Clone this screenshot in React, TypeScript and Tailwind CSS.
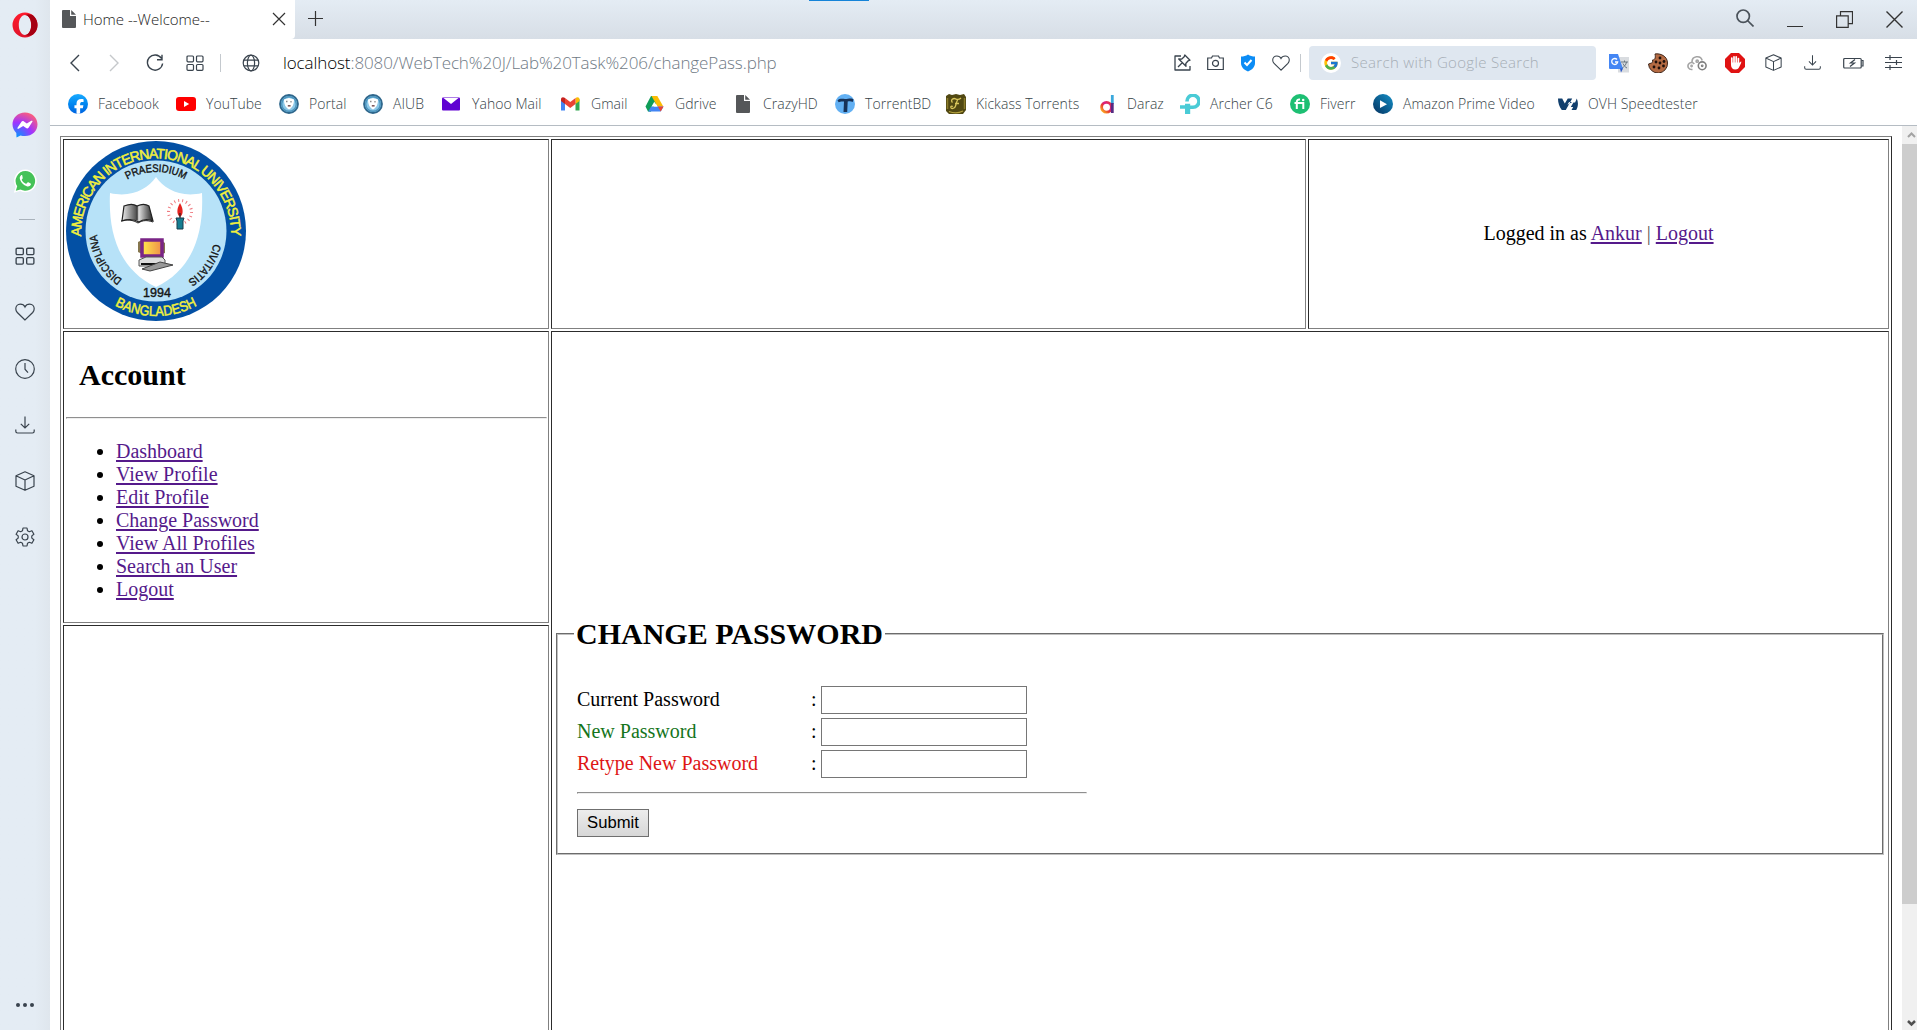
import React from "react";
import { FcGoogle } from "react-icons/fc";
import { FaFacebookF } from "react-icons/fa6";

type LineProps = { s?: number; w?: number; vb?: number; className?: string; children: React.ReactNode };

const Line = ({ s = 20, w = 1.2, vb = 20, className = "", children }: LineProps) => (
  <svg width={s} height={s} viewBox={`0 0 ${vb} ${vb}`} fill="none" stroke="currentColor" strokeWidth={w} className={`block shrink-0 ${className}`}>
    {children}
  </svg>
);

const Opera = () => (
  <svg width="26" height="26" viewBox="0 0 26 26" className="block">
    <defs>
      <linearGradient id="opA" x1="0" y1="0" x2="0" y2="1"><stop offset="0" stopColor="#ff1b2d" /><stop offset="1" stopColor="#e0132a" /></linearGradient>
    </defs>
    <path fillRule="evenodd" fill="url(#opA)" d="M13 .5a12.5 12.5 0 1 0 0 25 12.500 12.500 0 0 0 0-25zM13 3c3.600 0 6.200 4.400 6.200 10S16.600 23 13 23 6.800 18.600 6.800 13 9.400 3 13 3z" />
    <path fill="#a50012" d="M13 3c4-1.500 7.500-.5 8.700 1a12.500 12.500 0 0 1 0 18c-1.700 1.600-5 2.300-8.700 1 3.600 0 6.200-4.400 6.200-10S16.600 3 13 3z" />
  </svg>
);

const Messenger = () => (
  <svg width="26" height="26" viewBox="0 0 26 26" className="block">
    <defs>
      <radialGradient id="msg" cx=".2" cy="1" r="1.100"><stop offset="0" stopColor="#0099ff" /><stop offset=".55" stopColor="#a033ff" /><stop offset="1" stopColor="#ff6077" /></radialGradient>
    </defs>
    <path fill="url(#msg)" d="M13 .5C5.800.500.500 5.700.500 12.300c0 3.500 1.400 6.500 3.800 8.600L4.500 25.500l4-2c1.400.400 2.900.600 4.500.600 7.200 0 12.500-5.200 12.500-11.800S20.200.500 13 .500z" />
    <path fill="#fff" d="M5.500 15.700l3.800-5.800c.6-.9 1.800-1.100 2.600-.500l2.900 2.200 4.500-2.800c.7-.5 1.600.3 1.100 1l-3.700 5.800c-.6.900-1.800 1.100-2.600.500l-2.900-2.200-4.600 2.800c-.7.500-1.600-.3-1.100-1z" />
  </svg>
);

const WhatsApp = () => (
  <svg width="24" height="24" viewBox="0 0 24 24" className="block">
    <path fill="#fff" d="M12.500.500a11.300 11.300 0 0 0-9.800 17L.8 23.800l6.400-1.700A11.400 11.400 0 1 0 12.500.500z" />
    <path fill="#45c258" d="M12.500 2a9.900 9.900 0 0 0-8.300 15.200l-1.400 4.600 4.700-1.200A9.900 9.900 0 1 0 12.500 2z" />
    <path fill="#fff" d="M9.300 6.600c-.3-.6-.9-.6-1.200-.300-1.300 1.100-1.700 2.600-1 4.400 1.200 3 3.500 5.400 6.700 6.600 1.600.5 3.200.1 4-1.500.3-.7.2-1.200-.2-1.400l-2.200-1.100c-.4-.2-.6-.1-.9.200l-.9 1.100c-.2.300-.5.300-.8.200-1.800-.8-3.100-2-4-3.700-.2-.3-.1-.5.100-.7l.7-.9c.2-.3.2-.5.100-.8z" />
  </svg>
);

const Grid = ({ s = 18 }) => (
  <Line s={s} vb={18}>
    <rect x="1" y="2" width="6.500" height="5.800" rx="1" /><rect x="10.500" y="2" width="6.500" height="5.800" rx="1" />
    <rect x="1" y="10.500" width="6.500" height="5.800" rx="1" /><rect x="10.500" y="10.500" width="6.500" height="5.800" rx="1" />
  </Line>
);
const Heart = ({ s = 20 }) => (
  <Line s={s}><path d="M10 18 2.300 10.500A5 5 0 0 1 .8 6.800C.8 4.200 2.800 2.200 5.300 2.200 7.400 2.200 9.200 3.300 10 5c.8-1.700 2.600-2.800 4.700-2.800 2.500 0 4.500 2 4.500 4.600 0 1.500-.6 2.700-1.500 3.700z" /></Line>
);
const Clock = () => (
  <Line><circle cx="10" cy="10" r="9.300" /><path d="M10 4v6.200l3 3.500" /></Line>
);
const Download = ({ s = 20 }) => (
  <Line s={s}><path d="M10 1.500v11.500M5.800 8.800 10 13l4.200-4.200M.8 14.500v1.800c0 1.200.8 1.700 1.700 1.700h15c1 0 1.700-.5 1.700-1.700v-1.800" /></Line>
);
const Cube = ({ s = 20 }) => (
  <Line s={s}><path d="M10 .8 19 4.800v10.400L10 19.300 1 15.200V4.800zM1 4.800l9 4.200 9-4.200M10 9v10.300" strokeLinejoin="round" /></Line>
);
const Gear = () => (
  <Line><path strokeLinejoin="round" d="M8 1h4l.5 2.700 1.800 1 2.600-1 2 3.500-2.100 1.700v2.200l2.100 1.700-2 3.500-2.600-1-1.800 1L12 19H8l-.5-2.700-1.800-1-2.600 1-2-3.500 2.100-1.700V8.900L1.100 7.200l2-3.500 2.600 1 1.800-1z" /><circle cx="10" cy="10" r="3" /></Line>
);

const PageFile = () => (
  <svg width="14" height="18" viewBox="0 0 14 18" className="block"><path fill="#555759" d="M1 0h7v6h6v11a1 1 0 0 1-1 1H1a1 1 0 0 1-1-1V1a1 1 0 0 1 1-1zM9.200 0 14 4.800H9.200z" /></svg>
);

const Facebook = () => (
  <span className="flex size-5 items-end justify-center overflow-hidden rounded-full bg-gradient-to-b from-[#19aaff] to-[#0062e0]">
    <FaFacebookF className="size-[16px] translate-x-[1px] translate-y-[1px] text-white" />
  </span>
);
const YouTube = () => (
  <svg width="20" height="20" viewBox="0 0 20 20" className="block"><rect y="3" width="20" height="14" rx="3" fill="#f00" /><path d="M8 7l5.200 3L8 13z" fill="#fff" /></svg>
);
const Crest = () => (
  <svg width="20" height="20" viewBox="0 0 20 20" className="block">
    <circle cx="10" cy="10" r="9" fill="#8cc8e8" stroke="#2f678c" strokeWidth="1.800" />
    <circle cx="10" cy="10" r="7.300" fill="none" stroke="#4c94bd" strokeWidth="1.400" />
    <path d="M5 5.500l5-1.500 5 1.500c0 5-1.500 8-5 10-3.500-2-5-5-5-10z" fill="#fff" />
    <path d="M7 7.500h1.500M12 7v1.500" stroke="#8a8a8a" strokeWidth="1.300" /><path d="M8.800 11h2.800v1.600H8.800z" fill="#7d5a5c" />
  </svg>
);
const Yahoo = () => (
  <svg width="20" height="20" viewBox="0 0 20 20" className="block"><rect y="3.500" width="18" height="13" rx="1" fill="#6001d2" /><path d="M1.500 4h15L9 10z" fill="#fff" /></svg>
);
const Gmail = () => (
  <svg width="20" height="20" viewBox="0 0 20 20" className="block">
    <path fill="#4285f4" d="M0 5v11.500h4V9z" /><path fill="#34a853" d="M18.500 5v11.500h-4V9z" />
    <path fill="#c5221f" d="M0 5.500C0 3 2.200 2.500 4 4v6L0 7z" /><path fill="#fbbc04" d="M18.500 5.500c0-2.500-2.200-3-4-1.500v6l4-3z" />
    <path fill="#ea4335" d="M4 4l5.250 4L14.500 4v6l-5.250 4L4 10z" />
  </svg>
);
const Drive = () => (
  <svg width="20" height="20" viewBox="0 0 20 20" className="block">
    <path fill="#0f9d58" d="M6 2h3.800l2.800 4.800-6.800 11L3 17.500.5 12.500z" /><path fill="#fbbc04" d="M6.500 2h5.800l6 10.500h-5.800z" />
    <path fill="#4285f4" d="M6.200 12.500h12.300l-2.800 5H3.200z" /><path fill="#ea4335" d="M12.800 12.500h5.700l-2.800 5z" />
    <path fill="#fff" d="M9.300 7.700l2.900 4.800H6.500z" />
  </svg>
);
const TorrentBD = () => (
  <svg width="20" height="20" viewBox="0 0 20 20" className="block"><circle cx="10" cy="10" r="10" fill="#62b0f3" /><path fill="#173258" d="M2.500 6.500c2-2 4-1.800 7.500-1.500 3.500 0 6.500-1.500 8.500.5l-.8 2.500c-1.500-.8-3-.7-5-.5l-.5 10.500H8.500L9 7.500c-2-.1-4-.2-5.300.8z" /></svg>
);
const Kickass = () => (
  <svg width="20" height="20" viewBox="0 0 20 20" className="block">
    <path fill="#514812" d="M0 2l3-2 3 1 4-1 4 1 4-1 2 3v13l-3 4H3l-3-3z" />
    <path d="M6.500 8.500C4 6 7.500 3.800 9.500 4.800s3.500 1 5.500-.8M12 5c-1.500 2.500-1.800 5-2.500 7-.7 2.200-3.300 3.200-4.500 1.800-.8-1.200.8-2.300 1.800-1.200M9 9.500h4" stroke="#d9c65c" strokeWidth="1.300" fill="none" />
    <path d="M3 17.500c4 1.500 10 1.500 14-.5" stroke="#b5a23e" strokeWidth="1.300" fill="none" />
    <path d="M1.500 4v11M18.500 4v11" stroke="#8b7b2b" strokeWidth="1.500" />
  </svg>
);
const Daraz = () => (
  <svg width="20" height="20" viewBox="0 0 20 20" className="ml-[3px] block">
    <defs><linearGradient id="dz" x1="0" y1="1" x2="1" y2="0"><stop offset="0" stopColor="#ffbc20" /><stop offset=".4" stopColor="#e73b32" /><stop offset=".6" stopColor="#d91c88" /><stop offset="1" stopColor="#e73b32" /></linearGradient></defs>
    <circle cx="6.500" cy="13.200" r="4.900" stroke="url(#dz)" strokeWidth="2.800" fill="none" />
    <path d="M12.300 1v9" stroke="#3aa8dc" strokeWidth="2.800" fill="none" />
    <path d="M12.300 9v10" stroke="#562b83" strokeWidth="2.800" fill="none" />
  </svg>
);
const Archer = () => (
  <svg width="20" height="20" viewBox="0 0 20 20" className="block">
    <path d="M7 7.500A6 6 0 1 1 13 13.200H9.500" fill="none" stroke="#4acbd6" strokeWidth="3.600" /><path fill="#4acbd6" d="M0 11.300h6v3.500H0zM5 9.800h5.200V20H5z" />
  </svg>
);
const Fiverr = () => (
  <svg width="20" height="20" viewBox="0 0 20 20" className="block"><circle cx="10" cy="10" r="10" fill="#1dbf73" /><path d="M6.800 15V8.200c0-2 1-2.800 3.200-2.600M4.500 9h8.800v6" stroke="#fff" strokeWidth="2" fill="none" /><circle cx="13.200" cy="5.900" r="1.250" fill="#fff" /></svg>
);
const Prime = () => (
  <svg width="20" height="20" viewBox="0 0 20 20" className="block"><defs><linearGradient id="pv" x1="1" y1="0" x2="0" y2="1"><stop offset="0" stopColor="#1591c8" /><stop offset="1" stopColor="#04315f" /></linearGradient></defs><circle cx="10" cy="10" r="10" fill="url(#pv)" /><path d="M7 6.200l7 4-7 3.800z" fill="#fff" /></svg>
);
const Ovh = () => (
  <svg width="20" height="20" viewBox="0 0 20 20" className="block"><path fill="#123f6d" d="M0 4.500h4.200l2.600 5 3-5h4.400L7.800 16h-4C1.300 13 0 9 0 4.500zM14.300 8h-3.200l-1.600 2.800M18.800 4.500c1.700 4 1.500 8-.6 11.500h-4.700l1.700-3h-2.400l2.600-4.500h1.700z" /></svg>
);

const bookmarks = [
  { label: "Facebook", icon: <Facebook />, w: "w-[108px]" },
  { label: "YouTube", icon: <YouTube />, w: "w-[103px]" },
  { label: "Portal", icon: <Crest />, w: "w-[84px]" },
  { label: "AIUB", icon: <Crest />, w: "w-[79px]" },
  { label: "Yahoo Mail", icon: <Yahoo />, w: "w-[119px]" },
  { label: "Gmail", icon: <Gmail />, w: "w-[84px]" },
  { label: "Gdrive", icon: <Drive />, w: "w-[88px]" },
  { label: "CrazyHD", icon: <span className="flex pl-[3px]"><PageFile /></span>, w: "w-[102px]" },
  { label: "TorrentBD", icon: <TorrentBD />, w: "w-[111px]" },
  { label: "Kickass Torrents", icon: <Kickass />, w: "w-[151px]" },
  { label: "Daraz", icon: <Daraz />, w: "w-[83px]" },
  { label: "Archer C6", icon: <Archer />, w: "w-[110px]" },
  { label: "Fiverr", icon: <Fiverr />, w: "w-[83px]" },
  { label: "Amazon Prime Video", icon: <Prime />, w: "w-[185px]" },
  { label: "OVH Speedtester", icon: <Ovh />, w: "w-[160px]" },
];

const Sidebar = () => (
  <aside className="flex h-[1030px] w-[50px] shrink-0 flex-col items-center bg-[#e4ecf4] bg-gradient-to-r from-[#e4ecf4] from-70% to-[#dfe6ed] text-[#39434d]">
    <div className="mt-3 h-[100px]"><Opera /></div>
    <div className="h-[57px]"><Messenger /></div>
    <div className="h-12"><WhatsApp /></div>
    <div className="ml-1 mt-[2px] h-[27px] w-4 border-t border-[#a9b2bb]" />
    <div className="flex flex-col items-center gap-[36.300px]">
      <Grid s={20} /><Heart /><Clock /><Download /><Cube /><Gear />
    </div>
    <div className="mb-[23px] mt-auto flex gap-[3px]">
      <i className="size-[4px] rounded-full bg-[#39434d]" /><i className="size-[4px] rounded-full bg-[#39434d]" /><i className="size-[4px] rounded-full bg-[#39434d]" />
    </div>
  </aside>
);

const TabStrip = () => (
  <div className="flex h-[39px] bg-gradient-to-b from-[#e4ecf4] to-[#d7dee6]">
    <div className="flex w-[245px] items-start rounded-br bg-white pl-3 pt-[10px]">
      <PageFile />
      <span className="ml-[7px] w-[189px] whitespace-nowrap text-[15px] leading-[19px] text-[#222]">Home --Welcome--</span>
      <Line s={14} vb={14} className="mt-[2px] text-[#333]"><path d="M1 1l12 12M13 1 1 13" /></Line>
      <span className="w-[9px]" />
    </div>
    <Line s={15} vb={15} className="ml-[13px] mt-[11px] text-[#333]"><path d="M7.500 0v15M0 7.500h15" /></Line>
    <div className="relative h-full grow">
      <span className="absolute left-[486px] top-0 h-px w-[60px] bg-[#1583d8]" />
    </div>
    <div className="flex w-[181px] text-[#333]">
      <Line s={18} vb={18} w={1.700} className="mt-[9px] text-[#4a525a]"><circle cx="7.200" cy="7.200" r="6.200" /><path d="M11.500 11.500 17.500 17.500" /></Line>
      <span className="ml-[33px] mt-[26px] h-px w-4 bg-[#333]" />
      <Line s={17} vb={17} className="ml-[33px] mt-[11px]"><path d="M.6 4.800h11.600v11.600H.6zM4.500 4.800V.600h12v12h-4.300" /></Line>
      <Line s={17} vb={17} w={1.400} className="ml-[33px] mt-[11px]"><path d="M.5.500l16 16M16.500.500l-16 16" /></Line>
    </div>
  </div>
);

const Toolbar = () => (
  <div className="flex h-[49px] items-center pb-[2px] pl-5 text-[#39434d]">
    <Line s={18} vb={18} w={1.400}><path d="M9 1 1 9l8 8" /></Line>
    <Line s={18} vb={18} w={1.400} className="ml-[21px] text-[#c5c8cb]"><path d="M1 1l8 8-8 8" /></Line>
    <Line s={18} vb={18} w={1.400} className="ml-[19px]"><path d="M15.500 4.500A7.600 7.600 0 1 0 16.600 9.500M16 .8v5h-5" /></Line>
    <span className="ml-[22px]"><Grid /></span>
    <span className="ml-[16px] h-[18px] w-px bg-[#c4c9ce]" />
    <Line s={18} vb={18} className="ml-[21px]"><circle cx="9" cy="9" r="7.800" /><ellipse cx="9" cy="9" rx="3.600" ry="7.800" /><path d="M2 6.200h14M2 11.800h14" /></Line>
    <span className="ml-[23px] w-[891px] whitespace-nowrap text-[17px] tracking-[-0.1px] text-[#6f7a85]"><span className="text-black">localhost</span>:8080/WebTech%20J/Lab%20Task%206/changePass.php</span>
    <Line s={17} vb={17} w={1.300}><path d="M7 2H1v14h15v-4M4 13l4.500-4.500M10.800 1l5.200 5.200-1.800.6-2.400 2.700.2 2.800-7.300-7.300 2.800.2 2.700-2.400z" strokeLinejoin="round" /></Line>
    <Line s={17} vb={17} className="ml-[16px]"><path d="M.7 4h3.800l1-2h6l1 2h3.800v11.500H.700z" /><circle cx="8.500" cy="9.300" r="3" /></Line>
    <svg width="16" height="18" viewBox="0 0 16 18" className="ml-4 shrink-0"><path d="M8 .5c2 1.500 4.500 2 7 2v6.500c0 4-3 7-7 8.500-4-1.500-7-4.500-7-8.500V2.500c2.500 0 5-.5 7-2z" fill="#0c8cf5" /><path d="M4.500 8.500l2.500 2.500 4.500-5" stroke="#fff" strokeWidth="2" fill="none" /></svg>
    <span className="ml-[16px]"><Heart s={18} /></span>
    <span className="ml-[10px] h-[18px] w-px bg-[#c4c9ce]" />
    <div className="ml-2 flex h-[34px] w-[287px] shrink-0 items-center rounded-sm bg-[#dfe7f0] pl-[12px]">
      <span className="flex size-5 items-center justify-center rounded-full bg-white"><FcGoogle className="size-4" /></span>
      <span className="ml-[10px] whitespace-nowrap text-[15px] tracking-[0.320px] text-[#a6aeb6]">Search with Google Search</span>
    </div>
    <svg width="20" height="20" viewBox="0 0 20 20" className="ml-[13px] shrink-0"><rect x="9" y="4" width="11" height="15.500" fill="#d9dce0" /><path d="M12 9h7M15.500 7.500V9M17.500 9c-.5 3-2.500 5-4.500 6M14 10.500c1 2 2 3.500 4 4.500" stroke="#697681" fill="none" /><path d="M0 1h9l5 15H1a1 1 0 0 1-1-1z" fill="#4486f4" /><path d="M11 15.500h3l-2 4z" fill="#2a56c6" /><path d="M8 6.500A3 3 0 1 0 8.700 9H6" stroke="#fff" strokeWidth="1.300" fill="none" /></svg>
    <svg width="20" height="20" viewBox="0 0 20 20" className="ml-[19px] shrink-0"><path d="M7 1C12 0 19.500 3 19.500 10a9.500 9.500 0 0 1-19 1l3-1c1 0 1.500-1.500 1-3 2 0 3.500-1.500 2.500-6z" fill="#b56b43" stroke="#41281d" /><g fill="#1f100b"><circle cx="8" cy="9" r="1.400" /><circle cx="12" cy="5" r="1.400" /><circle cx="12" cy="10" r="1.400" /><circle cx="16" cy="8.500" r="1.400" /><circle cx="6" cy="14" r="1.400" /><circle cx="11" cy="15" r="1.400" /><circle cx="15.500" cy="13" r="1.400" /></g></svg>
    <Line className="ml-[19px] text-[#a4a4a4]" w={1.600}><path d="M5.500 16.500H4.500a3.500 3.500 0 1 1 2.800-5.600M5 9a5.200 5.200 0 0 1 10.200-1.500" /><circle cx="10.200" cy="8.200" r="1.100" /><circle cx="4.600" cy="13" r=".6" /><circle cx="15.200" cy="12.800" r="3.900" stroke="#808080" /><circle cx="15.200" cy="12.800" r=".6" stroke="#808080" /></Line>
    <svg width="20" height="20" viewBox="0 0 20 20" className="ml-[18px] shrink-0"><path d="M6 0h8l6 6v8l-6 6H6l-6-6V6z" fill="#e01212" /><path d="M6.800 11V5.200M9 10V3.800M11.200 10V3.800M13.400 11V5.500" stroke="#fff" strokeWidth="1.700" strokeLinecap="round" /><path d="M6 9.500h8.200c.3 1 1.300-1.500 2-1 .5.400-.5 2.500-1.500 4.500-1 2.400-2 3.500-4.500 3.500S6 14.500 6 12z" fill="#fff" /></svg>
    <span className="ml-[20px]"><Cube s={17} /></span>
    <span className="ml-[22px]"><Download s={17} /></span>
    <svg width="21" height="14" viewBox="0 0 21 14" className="ml-[22px] shrink-0" fill="none" stroke="currentColor" strokeWidth="1.200"><rect x=".7" y="2.500" width="17.500" height="9.500" rx="1" /><path d="M18.500 4.500h1.500v5.500h-1.500M12 3.500 7.500 7h4L7 10.500" /></svg>
    <Line s={17} vb={17} className="ml-[21px]"><path d="M0 3.500h17M0 8.500h17M0 13.500h17M5 1v5M11.500 6v5M5 11v5" /></Line>
  </div>
);

const UniversitySeal = () => (
  <svg width="180" height="180" viewBox="0 0 180 180" className="block" fontFamily="Liberation Sans, sans-serif" textAnchor="middle">
    <defs>
      <path id="ringTop" d="M15.500 101 A75 75 0 1 1 164.500 101" />
      <path id="ringBottom" d="M5 90 A85 85 0 0 0 175 90" />
      <path id="motto" d="M90 149 A59 59 0 0 1 90 31 A59 59 0 0 1 90 149" />
      <linearGradient id="book"><stop offset="0" stopColor="#eee" /><stop offset=".45" stopColor="#555" /><stop offset=".55" stopColor="#ddd" /><stop offset="1" stopColor="#222" /></linearGradient>
      <linearGradient id="crt"><stop offset="0" stopColor="#ffe94a" /><stop offset="1" stopColor="#ee8d4a" /></linearGradient>
    </defs>
    <circle cx="90" cy="90" r="90" fill="#0350a4" />
    <circle cx="90" cy="90" r="70.500" fill="#b7e2f8" />
    <path fill="#fff" d="M90 36c8 12 25 21 46 16 2 42-10 77-46 94-36-17-48-52-46-94 21 5 38-4 46-16z" />
    <g fill="#f3f03c" fontSize="14" stroke="#f3f03c" strokeWidth=".5">
      <text><textPath href="#ringTop" startOffset="50%" textLength="241" lengthAdjust="spacing">AMERICAN INTERNATIONAL UNIVERSITY</textPath></text>
      <text><textPath href="#ringBottom" startOffset="50%" textLength="86" lengthAdjust="spacingAndGlyphs">BANGLADESH</textPath></text>
    </g>
    <g fill="#151515" fontSize="11" stroke="#151515" strokeWidth=".4">
      <text><textPath href="#motto" startOffset="50%" textLength="60" lengthAdjust="spacingAndGlyphs">PRAESIDIUM</textPath></text>
      <text><textPath href="#motto" startOffset="16.800%" textLength="53" lengthAdjust="spacingAndGlyphs">DISCIPLINA</textPath></text>
      <text><textPath href="#motto" startOffset="84.700%" textLength="46" lengthAdjust="spacingAndGlyphs">CIVITATIS</textPath></text>
      <text x="91" y="156" fontSize="12.500" textLength="28">1994</text>
    </g>
    <path d="M58 65c5-2 10-2 13 0 4-2 9-2 12 0l4 15c-5-2-10-2-14 1-5-3-11-3-17-1z" fill="url(#book)" stroke="#222" strokeWidth="1.200" />
    <path d="M71 65v14M55 80c6-2 12-1 17 2 5-3 9-3 15-1" fill="none" stroke="#222" />
    <circle cx="114" cy="71" r="11.500" fill="none" stroke="#ef7a80" strokeWidth="3" strokeDasharray="1 3" />
    <path d="M114 62c-4 7-3 12 0 14 3-2 4-7 0-14z" fill="#e32320" /><path d="M114 72v6" stroke="#222" strokeWidth="1.200" />
    <path d="M110 77h8l-1 3v8h-6v-8z" fill="#167d91" stroke="#183c4d" />
    <path d="M72 101l4-2v14l-4-2zM96 100l3 2v10l-3 1z" fill="#85764d" />
    <rect x="76" y="99" width="20" height="16" fill="url(#crt)" stroke="#7a2586" strokeWidth="3.500" />
    <path d="M73 119l7-3h16l3 3v6H73z" fill="#ddd" stroke="#555" /><path d="M75 123h22" stroke="#111" strokeWidth="2" />
    <path d="M76 128l18-7 13 3-23 6z" fill="#999" stroke="#444" />
  </svg>
);

const cell = "border border-t-[#2c2c2c] border-l-[#2c2c2c] border-b-[#808080] border-r-[#808080]";
const link = "text-[#551a8b] underline decoration-2 underline-offset-[2px]";
const rule = "border border-t-[#8f8f8f] border-l-[#8f8f8f] border-b-[#eeeeee] border-r-[#eeeeee]";
const menu = ["Dashboard", "View Profile", "Edit Profile", "Change Password", "View All Profiles", "Search an User", "Logout"];
const fields = [
  { label: "Current Password", color: "text-black" },
  { label: "New Password", color: "text-[#14751b]" },
  { label: "Retype New Password", color: "text-[#de1515]" },
];

const WebPage = () => (
  <div className="h-[904px] w-[1852px] overflow-hidden pl-[10px] pt-[10px] font-['Liberation_Serif',serif] text-[20px] font-normal leading-[23px] text-black">
    <div className="grid h-[1100px] w-[1832px] grid-cols-[486px_755px_581px] grid-rows-[190px_292px_1fr] gap-[2px] border border-t-[#808080] border-l-[#808080] border-b-[#2c2c2c] border-r-[#2c2c2c] p-[2px]">
      <div className={`${cell} pl-[2px] pt-[1px]`}><UniversitySeal /></div>
      <div className={cell} />
      <div className={`${cell} flex items-center justify-center`}>
        <p className="-mt-px">Logged in as <a className={link}>Ankur</a> <span className="text-[#555]">|</span> <a className={link}>Logout</a></p>
      </div>
      <nav className={`${cell} pl-[2px] pr-px`}>
        <h2 className="ml-[13px] mt-[26px] text-[30px] font-bold leading-[34px]">Account</h2>
        <hr className={`${rule} mt-[25px]`} />
        <ul className="ml-[50px] mt-[21px] list-disc">
          {menu.map((m) => <li key={m}><a className={link}>{m}</a></li>)}
        </ul>
      </nav>
      <main className={`${cell} col-span-2 row-span-2 px-[4px] pt-[284px]`}>
        <fieldset className="h-[239px] border-2 border-[#c0c0c0] pl-[19px] [border-style:groove]">
          <legend className="-ml-[3px] px-[2px] text-[30px] font-bold leading-[35px]">CHANGE PASSWORD</legend>
          <form className="mt-[35px] flex w-[510px] flex-col">
            <div className="flex flex-col gap-1">
              {fields.map((f) => (
                <label key={f.label} className="flex h-7 items-center">
                  <span className={`-mt-px w-[234px] ${f.color}`}>{f.label}</span>
                  <span className="-mt-px w-[10px]">:</span>
                  <input type="password" className="h-7 w-[206px] border border-[#767676] bg-white" />
                </label>
              ))}
            </div>
            <hr className={`${rule} mt-[14px]`} />
            <button type="button" className="mt-[15px] h-7 w-[72px] border border-[#6f6f6f] bg-gradient-to-b from-[#ededed] to-[#d7d7d7] font-['Liberation_Sans',sans-serif] text-[16.67px] leading-5">Submit</button>
          </form>
        </fieldset>
      </main>
      <div className={cell} />
    </div>
  </div>
);

const Scrollbar = () => (
  <div className="flex w-[15px] flex-col bg-[#f0f0f0] text-[#a3a3a3]">
    <Line s={15} vb={15} w={2} className="h-[18px]"><path d="M6 9.500 9.500 6l3.500 3.500" /></Line>
    <div className="h-[760px] bg-[#cdcdcd]" />
    <Line s={15} vb={15} w={2.500} className="mt-auto text-[#505050]"><path d="M6 6 9.500 9.500 13 6" /></Line>
  </div>
);

export default function App() {
  return (
    <div className="flex h-[1030px] w-[1917px] overflow-hidden bg-white font-['Open_Sans','Noto_Sans',sans-serif] font-[350]">
      <Sidebar />
      <div className="flex w-[1867px] flex-col">
        <TabStrip />
        <Toolbar />
        <div className="flex h-[38px] border-b border-[#b5bcc3] pl-[18px] pt-[6px]">
          {bookmarks.map((b) => (
            <div key={b.label} className={`flex h-5 shrink-0 items-center ${b.w}`}>
              <span className="w-[30px] shrink-0">{b.icon}</span>
              <span className="-mt-[2px] whitespace-nowrap text-[14px] tracking-[0.050px] text-[#363f47]">{b.label}</span>
            </div>
          ))}
        </div>
        <div className="flex h-[904px]">
          <WebPage />
          <Scrollbar />
        </div>
      </div>
    </div>
  );
}
